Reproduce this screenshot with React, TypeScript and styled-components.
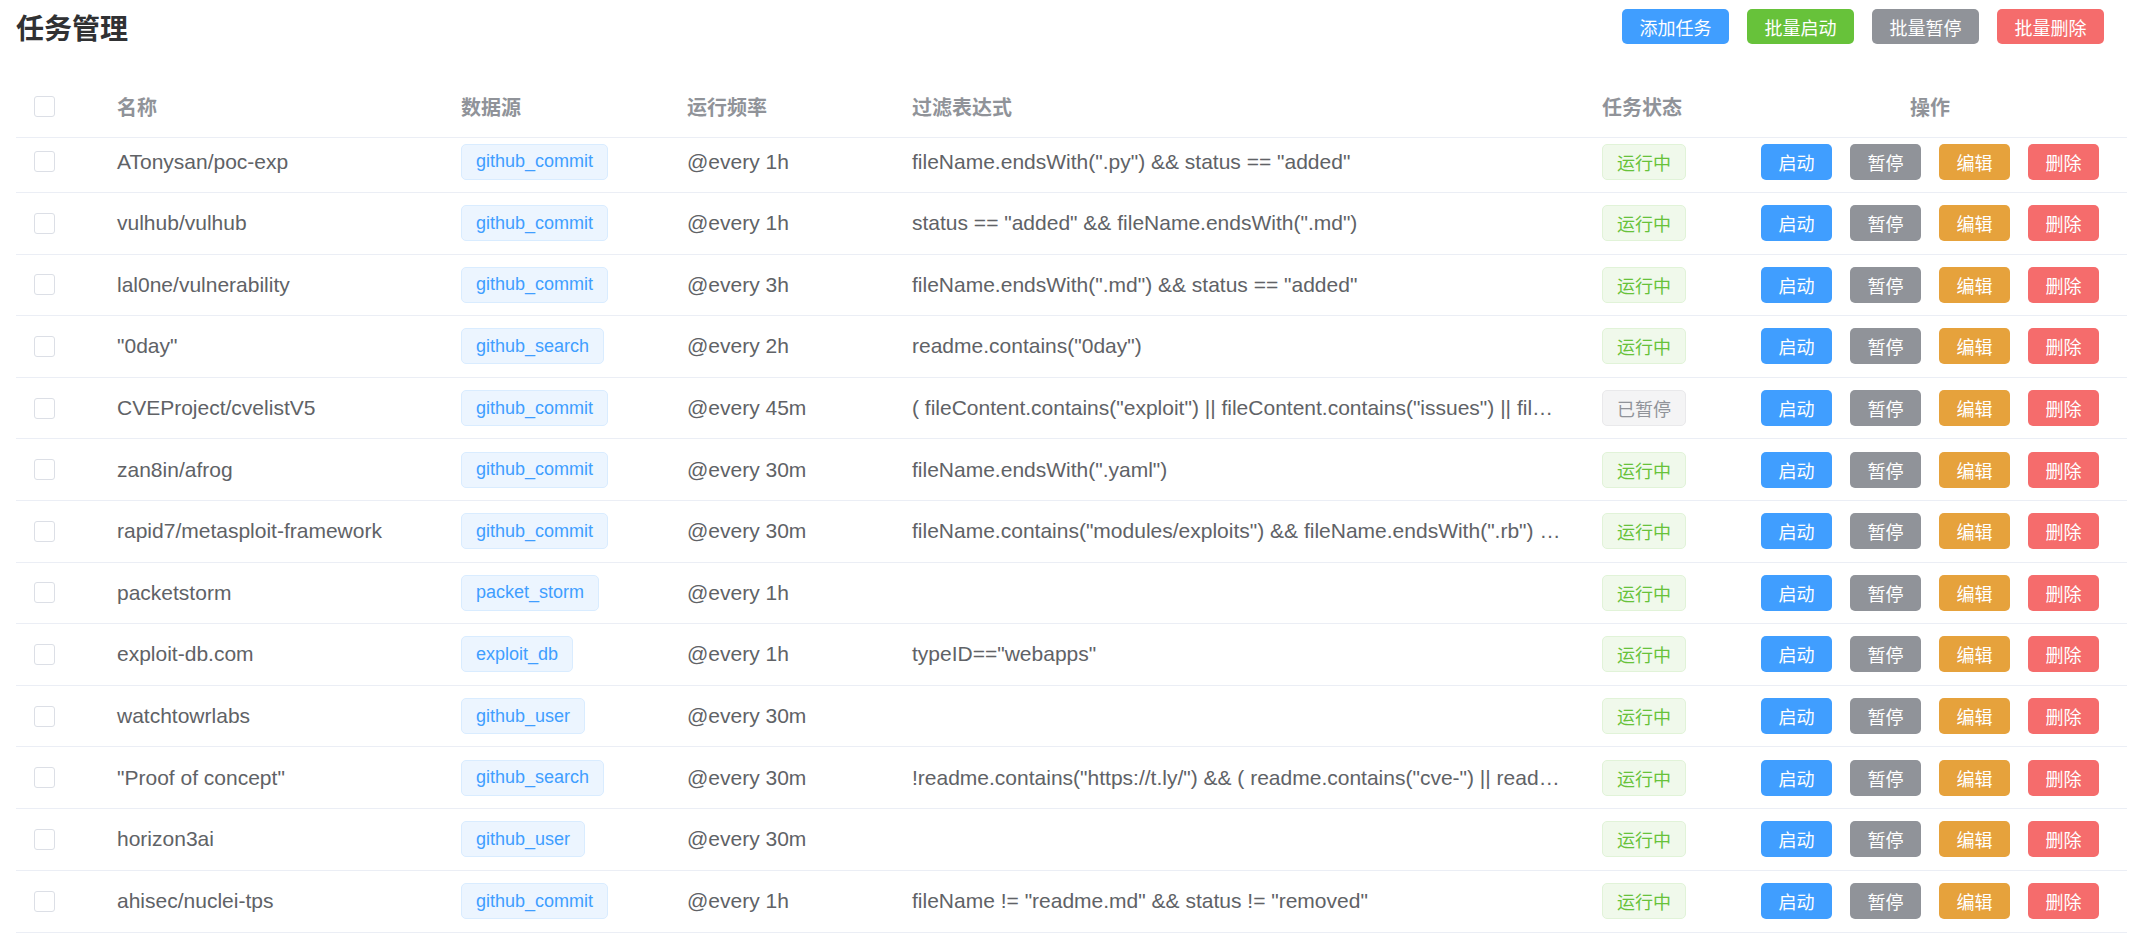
import styled, { createGlobalStyle, css } from 'styled-components';

const GlobalStyle = createGlobalStyle`
  html, body {
    margin: 0;
    padding: 0;
    background: #fff;
  }
  body {
    font-family: "Liberation Sans", Arial, "Noto Sans CJK SC", sans-serif;
    color: #606266;
  }
  * {
    box-sizing: border-box;
  }
`;

type Variant = 'primary' | 'success' | 'info' | 'danger' | 'warning';

const colors: Record<Variant, string> = {
  primary: '#409eff',
  success: '#67c23a',
  info: '#909399',
  danger: '#f56c6c',
  warning: '#e6a23c',
};

const Page = styled.main`
  padding: 0 14px 0 16px;
`;

const TopBar = styled.header`
  display: flex;
  align-items: center;
  justify-content: space-between;
  height: 53px;
  margin-bottom: 23px;
`;

const Title = styled.h1`
  margin: 0;
  font-size: 28px;
  font-weight: 700;
  color: #303133;
  font-family: "Noto Sans CJK SC", sans-serif;
  line-height: 1;
`;

const Toolbar = styled.div`
  display: flex;
  gap: 18px;
  padding-right: 23px;
`;

const buttonBase = css<{ $variant: Variant }>`
  border: none;
  border-radius: 5px;
  color: #fff;
  background: ${(p) => colors[p.$variant]};
  font-family: "Noto Sans CJK SC", sans-serif;
  font-size: 18px;
  line-height: 1;
  padding: 0 17.5px;
  cursor: pointer;
  white-space: nowrap;
`;

const ToolButton = styled.button<{ $variant: Variant }>`
  ${buttonBase}
  height: 35px;
`;

const Table = styled.section`
  border-bottom: 1px solid #ebeef5;
`;

const gridCols = '87px 344px 226px 225px minmax(0, 690px) 145px 394px';

const HeadRow = styled.div`
  display: grid;
  grid-template-columns: ${gridCols};
  height: 62px;
  align-items: center;
  border-bottom: 1px solid #ebeef5;
  color: #909399;
  font-weight: 700;
  font-size: 20px;
  font-family: "Noto Sans CJK SC", sans-serif;
`;

const Body = styled.div`
  height: 794px;
  overflow: hidden;
`;

const BodyInner = styled.div`
  margin-top: -6.6px;
`;

const Row = styled.div`
  display: grid;
  grid-template-columns: ${gridCols};
  height: 61.6px;
  align-items: center;
  border-bottom: 1px solid #ebeef5;
  font-size: 21px;
  color: #606266;

  &:last-child {
    border-bottom: none;
  }
`;

const Cell = styled.div<{ $center?: boolean }>`
  min-width: 0;
  padding: 0 14px;
  white-space: nowrap;
  overflow: hidden;
  text-overflow: ellipsis;
  ${(p) =>
    p.$center &&
    css`
      display: flex;
      justify-content: center;
      gap: 18px;
    `}
`;

const FilterCell = styled(Cell)`
  padding-right: 24px;
`;

const CheckCell = styled.div`
  padding-left: 18px;
  display: flex;
  align-items: center;
`;

const Checkbox = styled.span`
  display: inline-block;
  width: 21px;
  height: 21px;
  border: 1px solid #dcdfe6;
  border-radius: 3px;
  background: #fff;
`;

const SourceTag = styled.span`
  display: inline-flex;
  align-items: center;
  height: 36px;
  padding: 0 14px;
  border: 1px solid #d9ecff;
  border-radius: 5px;
  background: #ecf5ff;
  color: #409eff;
  font-size: 18px;
`;

const StatusTag = styled.span<{ $paused?: boolean }>`
  display: inline-flex;
  align-items: center;
  height: 36px;
  padding: 0 14px;
  border-radius: 5px;
  font-family: "Noto Sans CJK SC", sans-serif;
  font-size: 18px;
  border: 1px solid ${(p) => (p.$paused ? '#e9e9eb' : '#e1f3d8')};
  background: ${(p) => (p.$paused ? '#f4f4f5' : '#f0f9eb')};
  color: ${(p) => (p.$paused ? '#909399' : '#67c23a')};
`;

const ActionButton = styled.button<{ $variant: Variant }>`
  ${buttonBase}
  height: 36px;
  width: 71px;
  padding: 0;
`;

type Task = {
  name: string;
  source: string;
  freq: string;
  filter: string;
  paused?: boolean;
};

const tasks: Task[] = [
  { name: 'ATonysan/poc-exp', source: 'github_commit', freq: '@every 1h', filter: 'fileName.endsWith(".py") && status == "added"' },
  { name: 'vulhub/vulhub', source: 'github_commit', freq: '@every 1h', filter: 'status == "added" && fileName.endsWith(".md")' },
  { name: 'lal0ne/vulnerability', source: 'github_commit', freq: '@every 3h', filter: 'fileName.endsWith(".md") && status == "added"' },
  { name: '"0day"', source: 'github_search', freq: '@every 2h', filter: 'readme.contains("0day")' },
  {
    name: 'CVEProject/cvelistV5',
    source: 'github_commit',
    freq: '@every 45m',
    filter: '( fileContent.contains("exploit") || fileContent.contains("issues") || fileContent.contains("poc") )',
    paused: true,
  },
  { name: 'zan8in/afrog', source: 'github_commit', freq: '@every 30m', filter: 'fileName.endsWith(".yaml")' },
  {
    name: 'rapid7/metasploit-framework',
    source: 'github_commit',
    freq: '@every 30m',
    filter: 'fileName.contains("modules/exploits") && fileName.endsWith(".rb") && status == "added"',
  },
  { name: 'packetstorm', source: 'packet_storm', freq: '@every 1h', filter: '' },
  { name: 'exploit-db.com', source: 'exploit_db', freq: '@every 1h', filter: 'typeID=="webapps"' },
  { name: 'watchtowrlabs', source: 'github_user', freq: '@every 30m', filter: '' },
  {
    name: '"Proof of concept"',
    source: 'github_search',
    freq: '@every 30m',
    filter: '!readme.contains("https://t.ly/") && ( readme.contains("cve-") || readme.contains("poc") )',
  },
  { name: 'horizon3ai', source: 'github_user', freq: '@every 30m', filter: '' },
  { name: 'ahisec/nuclei-tps', source: 'github_commit', freq: '@every 1h', filter: 'fileName != "readme.md" && status != "removed"' },
];

const App = () => {
  return (
    <Page>
      <GlobalStyle />
      <TopBar>
        <Title>任务管理</Title>
        <Toolbar>
          <ToolButton $variant="primary">添加任务</ToolButton>
          <ToolButton $variant="success">批量启动</ToolButton>
          <ToolButton $variant="info">批量暂停</ToolButton>
          <ToolButton $variant="danger">批量删除</ToolButton>
        </Toolbar>
      </TopBar>
      <Table>
        <HeadRow>
          <CheckCell>
            <Checkbox />
          </CheckCell>
          <Cell>名称</Cell>
          <Cell>数据源</Cell>
          <Cell>运行频率</Cell>
          <Cell>过滤表达式</Cell>
          <Cell>任务状态</Cell>
          <Cell $center>操作</Cell>
        </HeadRow>
        <Body>
          <BodyInner>
            {tasks.map((t) => (
              <Row key={t.name}>
                <CheckCell>
                  <Checkbox />
                </CheckCell>
                <Cell>{t.name}</Cell>
                <Cell>
                  <SourceTag>{t.source}</SourceTag>
                </Cell>
                <Cell>{t.freq}</Cell>
                <FilterCell>{t.filter}</FilterCell>
                <Cell>
                  <StatusTag $paused={t.paused}>{t.paused ? '已暂停' : '运行中'}</StatusTag>
                </Cell>
                <Cell $center>
                  <ActionButton $variant="primary">启动</ActionButton>
                  <ActionButton $variant="info">暂停</ActionButton>
                  <ActionButton $variant="warning">编辑</ActionButton>
                  <ActionButton $variant="danger">删除</ActionButton>
                </Cell>
              </Row>
            ))}
          </BodyInner>
        </Body>
      </Table>
    </Page>
  );
};

export default App;
